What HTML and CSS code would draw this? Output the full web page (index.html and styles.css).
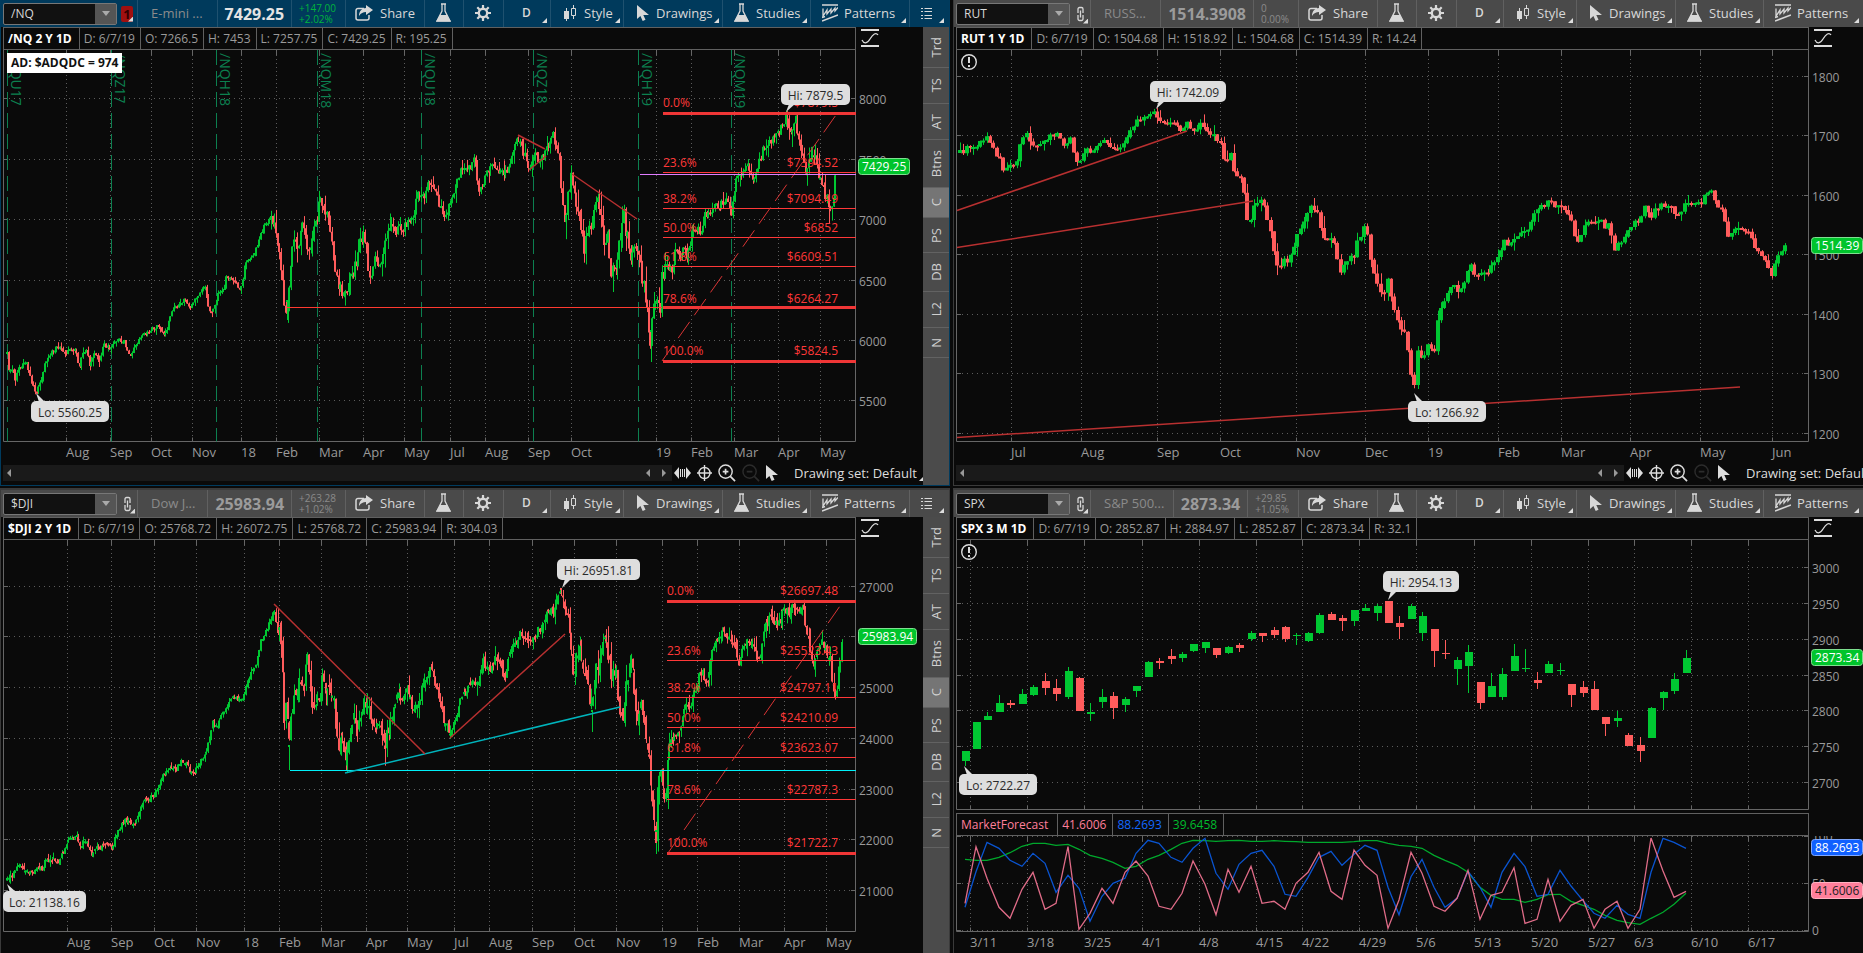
FILE: index.html
```html
<!DOCTYPE html>
<html lang="en">
<head>
<meta charset="utf-8">
<meta name="viewport" content="width=device-width, initial-scale=1">
<title>Charts</title>
<link rel="stylesheet" href="styles.css">
</head>
<body>
<svg class="sprite" aria-hidden="true">
  <symbol id="i-share" viewBox="0 0 18 16"><path d="M9 3.500H3a2 2 0 0 0-2 2V13a2 2 0 0 0 2 2h9a2 2 0 0 0 2-2v-3" fill="none" stroke="currentColor" stroke-width="1.500"/><path d="M11 0l7 5-7 5V7C8 7 6 8 4 11c0-5 3-8 7-8z" fill="currentColor"/></symbol>
  <symbol id="i-flask" viewBox="0 0 15 20"><path d="M5 1h5M6 1v7L1 18h13L9 8V1" fill="none" stroke="currentColor" stroke-width="1.300"/><path d="M4 12h7l4 6.500H0z" fill="currentColor"/></symbol>
  <symbol id="i-gear" viewBox="0 0 16 16"><circle cx="8" cy="8" r="4.200" fill="none" stroke="currentColor" stroke-width="2.400"/><path d="M8 0v3M8 13v3M0 8h3M13 8h3M2.300 2.300l2.200 2.200M11.500 11.500l2.200 2.200M2.300 13.700l2.200-2.200M11.500 4.500l2.200-2.200" stroke="currentColor" stroke-width="2.200"/></symbol>
  <symbol id="i-candles" viewBox="0 0 14 16"><path d="M3.500 3v13M10.500 0v3M10.500 11v3" stroke="currentColor"/><path d="M1 6h5v8H1z" fill="currentColor"/><path d="M8.500 3.500h4v7h-4z" fill="none" stroke="currentColor"/></symbol>
  <symbol id="i-cursor" viewBox="0 0 12 16"><path d="M0 0v14l3.400-3 2.300 5 2.800-1.200L6.300 10H12z" fill="currentColor"/></symbol>
  <symbol id="i-patterns" viewBox="0 0 16 18"><path d="M0 1h16M1 4.500v7.500l4-6v4l4-5v4l4-5v3l3-3.500" fill="none" stroke="currentColor" stroke-width="1.300"/><path d="M0 17l16-6M0 13.500l3-1" stroke="currentColor" stroke-width="1.600"/></symbol>
  <symbol id="i-list" viewBox="0 0 11 13"><path d="M0 1.500h2M0 4.500h2M0 8.500h2M0 11.500h2M3.500 1.500H11M3.500 4.500H11M3.500 8.500H11M3.500 11.500H11" stroke="currentColor"/></symbol>
  <symbol id="i-link" viewBox="0 0 12 18"><path d="M3 8V4a1.500 1.500 0 0 1 1.500-1.500h2A1.500 1.500 0 0 1 8 4v4M3 10v4a1.500 1.500 0 0 0 1.500 1.500h2A1.500 1.500 0 0 0 8 14v-4M5.500 5.500v7" fill="none" stroke="currentColor" stroke-width="1.300"/></symbol>
  <symbol id="i-scale" viewBox="0 0 18 18"><path d="M0 1h18M0 17h18" stroke="currentColor" stroke-width="2"/><path d="M1 11c2 4 5 4 8-1s6-7 8-4" fill="none" stroke="currentColor" stroke-width="1.300"/></symbol>
  <symbol id="i-pan" viewBox="0 0 17 12"><path d="M0 6l5-6v12zM17 6l-5-6v12z" fill="currentColor"/><path d="M6.500 2v8M8.500 2v8M10.500 2v8" stroke="currentColor"/></symbol>
  <symbol id="i-cross" viewBox="0 0 15 16"><circle cx="7.500" cy="8" r="5.500" fill="none" stroke="currentColor" stroke-width="1.400"/><path d="M7.500 0v16M0 8h15" stroke="currentColor" stroke-width="1.400"/></symbol>
  <symbol id="i-zoomin" viewBox="0 0 19 19"><circle cx="8" cy="8" r="7" fill="none" stroke="currentColor" stroke-width="1.500"/><path d="M5 8h6M8 5v6M13 13l5 5" stroke="currentColor" stroke-width="1.800"/></symbol>
  <symbol id="i-zoomout" viewBox="0 0 19 19"><circle cx="8" cy="8" r="7" fill="none" stroke="currentColor" stroke-width="1.500"/><path d="M5 8h6M13 13l5 5" stroke="currentColor" stroke-width="1.800"/></symbol>
  <symbol id="i-alert" viewBox="0 0 18 18"><circle cx="9" cy="9" r="7.300" fill="none" stroke="currentColor" stroke-width="1.400"/><path d="M9 4v6M9 12v2" stroke="currentColor" stroke-width="2"/></symbol>
</svg>
<main class="desk" id="desk"></main>
<script src="charts.js"></script>
</body>
</html>
```
FILE: styles.css
```css
* { box-sizing: border-box; }
body {
  margin: 0;
  background: #0a0a0a;
  color: #9a9a9a;
  font: 12px/16px "Open Sans", "Noto Sans", sans-serif;
}
button, input { font: inherit; color: inherit; }
button { background: none; border: 0; padding: 0; }
.sprite { position: absolute; width: 0; height: 0; }
.desk {
  display: grid;
  grid-template-columns: 950fr 910fr;
  grid-template-rows: 486fr 465fr;
  gap: 2px 3px;
  height: 100vh;
  min-height: 600px;
  overflow: hidden;
}
.panel {
  display: flex;
  flex-direction: column;
  min-width: 0;
  min-height: 0;
  overflow: hidden;
  padding-left: 2px;
  border: 1px solid #3a3a3a;
  border-top: 0;
}
.panel--lower { border-top: 2px solid #3a3a3a; border-bottom: 0; }
.panel--right { border-right: 0; }
.panel--active { border-color: #003b5e; }

/* toolbar */
.toolbar {
  display: flex;
  flex: none;
  height: 27px;
  margin-left: -2px;
  background: #4a4a4a;
  color: #d8d8d8;
  font-size: 13px;
}
.panel--active .toolbar { background: #003a5c; }
.symbol { display: flex; flex: none; align-items: center; width: 136px; padding-left: 2px; gap: 4px; }
.combo {
  display: flex;
  width: 114px;
  height: 22px;
  border: 1px solid #777;
  border-radius: 2px;
  background: #111;
}
.combo__input { flex: 1; min-width: 0; padding: 0 0 0 7px; border: 0; background: none; font-size: 12px; outline: 0; }
.combo__arrow { display: grid; place-items: center; width: 21px; background: #555; }
.combo__arrow::before { content: ""; border: 4px solid transparent; border-top: 5px solid #aaa; border-bottom: 0; }
.link { position: relative; display: grid; place-items: center; width: 14px; height: 20px; }
.link--red { background: #a01010; color: #300; border-radius: 2px; height: 16px; width: 12px; font-weight: 700; }
.quote { display: flex; flex: none; width: 208px; }
.quote > * { border-left: 1px solid rgba(255, 255, 255, .12); }
.quote__name { flex: 1; padding: 5px 0 0 13px; color: #8b8b8b; overflow: hidden; white-space: nowrap; }
.quote__price { padding: 3px 7px 0; color: #9b9b9b; font-size: 16px; line-height: 22px; font-weight: 700; }
.quote__change { padding: 3px 9px 0 7px; color: #8b8b8b; font-size: 10px; line-height: 11px; }
.panel--active .quote__price { color: #e4e4e4; }
.panel--active .quote__change { color: #00b43c; }
.tool {
  position: relative;
  display: flex;
  flex: none;
  align-items: center;
  gap: 7px;
  padding: 0 0 1px 11px;
  border-left: 1px solid rgba(255, 255, 255, .12);
}
.tool--share { width: 79px; padding-left: 9px; }
.tool--flask { width: 39px; }
.tool--gear { width: 40px; }
.tool--period { width: 47px; padding-left: 18px; font-weight: 600; font-size: 12px; }
.tool--style { width: 73px; padding-left: 12px; }
.tool--drawings { width: 99px; padding-left: 13px; }
.tool--studies { width: 88px; }
.tool--patterns { width: 99px; gap: 6px; }
.tool--list { width: 38px; }
.menu::after {
  content: "";
  position: absolute;
  right: 3px;
  bottom: 4px;
  width: 5px;
  height: 5px;
  background: #ddd;
  clip-path: polygon(100% 0, 100% 100%, 0 100%);
}
.link.menu::after { right: 0; bottom: 0; }
.icon { display: block; flex: none; }

/* chart */
.panel__body { display: flex; flex: 1; min-height: 0; }
.chart { position: relative; display: flex; flex: 1; flex-direction: column; min-width: 0; overflow: hidden; }
.head { display: flex; flex: none; height: 23px; }
.readout {
  display: flex;
  flex: 1;
  margin: 0;
  padding: 0;
  list-style: none;
  border: 1px solid #606060;
  line-height: 21px;
  white-space: nowrap;
}
.readout li { padding: 0 5px 0 4px; border-right: 1px solid #606060; }
.readout li:first-child { padding: 0 7px 0 4px; color: #fff; font-weight: 700; }
.head__scale { flex: none; padding: 2px 0 0 5px; color: #ddd; }
.chart--left .head__scale { width: 67px; }
.chart--right .head__scale { width: 54px; }
.plot { position: relative; flex: 1; min-height: 0; }
.plot--price { flex: 272; }
.plot--study { flex: 117; }
.surface { display: block; position: absolute; width: 100%; height: 100%; overflow: hidden; }
.head--study { margin-top: 1px; font-size: 12px; }
.readout--study li, .readout--study li:first-child { padding: 0 6px 0 4px; font-weight: 400; }
.readout--study li:first-child { padding-right: 9px; }
.readout--study .pink, .readout--study li.pink:first-child { color: #ff7f9b; }
.readout--study .blue { color: #1468ff; }
.readout--study .green { color: #00bb2d; }
.note {
  position: absolute;
  left: 4px;
  top: 3px;
  padding: 2px 4px;
  background: #fff;
  color: #111;
  font-weight: 700;
}
.alert { position: absolute; left: 4px; top: 3px; color: #ddd; }
.foot { display: flex; flex: none; align-items: center; height: 22px; padding-bottom: 2px; }
.scroll { display: flex; flex: 1; align-items: center; gap: 12px; height: 16px; padding: 0 6px 0 4px; background: #1a1a1a; }
.scroll button { width: 4px; height: 8px; background: #999; clip-path: polygon(100% 0, 100% 100%, 0 50%); }
.scroll button:first-child { margin-right: auto; }
.scroll button:last-child { clip-path: polygon(0 0, 100% 50%, 0 100%); }
.tools { display: flex; flex: none; align-items: center; width: 251px; padding-left: 2px; gap: 6px; color: #ddd; font-size: 13px; white-space: nowrap; }
.chart--right .tools { width: 239px; overflow: hidden; }
.tools .dim { color: #2c2c2c; }
.tools .set { position: relative; padding: 0 7px 0 10px; }
.tools .set::after { right: 0; bottom: 0; }

/* side tabs */
.tabs { flex: none; width: 26px; background: #4b4b4b; color: #d0d0d0; font-size: 13px; }
.tabs button {
  display: flex;
  align-items: center;
  width: 26px;
  padding: 10px 0;
  border-bottom: 1px solid #626262;
  writing-mode: vertical-rl;
  line-height: 26px;
}
.tabs button span { transform: rotate(180deg); }
.tabs .on { background: #757575; }

/* drawing */
.grid { stroke: #5c5c5c; fill: none; }
.grid--h { stroke-dasharray: 1 4; }
.grid--v { stroke-dasharray: 1 3; }
.frame { stroke: #666; fill: none; }
.axis { fill: #9a9a9a; font-size: 12px; }
.axis--date { font-size: 13px; }
.roll { stroke: #0c8050; stroke-dasharray: 15 6; }
.roll-text { fill: #0c8050; font-size: 14px; }
.up { stroke: #00c832; fill: none; }
.down { stroke: #ff5c5c; fill: none; }
.body-2 { stroke-width: 2; }
.body-4 { stroke-width: 4; }
.body-8 { stroke-width: 8; }
.trend { fill: none; stroke: #b83030; stroke-width: 1.500; }
.trend--bright { stroke: #ff3a30; stroke-width: 1; }
.trend--cyan { stroke: #00f0f8; stroke-width: 1; }
.trend--teal { stroke: #00b4bc; }
.trend--violet { stroke: #e07cff; stroke-width: 1; }
.fib { stroke: #ff3838; }
.fib--thick { stroke: #f03636; stroke-width: 3; }
.fib--diag { stroke: #d83434; stroke-dasharray: 20 8; fill: none; }
.fib-text { fill: #ff3838; font-size: 12px; }
.bubble { fill: #dedede; }
.bubble-text { fill: #2a2a2a; font-size: 12px; }
.tag { stroke-width: 1; }
.tag--green { fill: #00c42c; stroke: #7fe090; }
.tag--blue { fill: #1060ff; stroke: #7fa8ff; }
.tag--pink { fill: #ff7f9b; stroke: #ffb0c0; }
.tag-text { fill: #fff; font-size: 12px; }
.tag-text--dark { fill: #222; }
.line { fill: none; stroke-width: 1.300; }
.line--green { stroke: #00a82c; }
.line--blue { stroke: #0a54d0; }
.line--pink { stroke: #e06c88; }
```
FILE: charts.js
```js
const months2y = 'Aug Sep Oct Nov 18 Feb Mar Apr May Jul Aug Sep Oct';

const nqPath = [7,354,9,372,12,368,15,380,18,370,22,365,26,360,29,372,32,384,36,392,41,378,46,362,52,350,58,347,62,348,66,354,70,350,76,350,79,368,82,352,86,350,90,366,95,354,99,362,104,341,107,348,112,345,117,340,124,341,130,356,136,345,143,334,150,330,158,325,165,335,170,318,171,312,178,305,184,299,191,308,196,297,200,292,205,289,209,310,213,310,218,295,223,290,227,276,233,280,241,290,245,265,252,257,258,243,264,227,271,216,276,228,279,250,282,275,284,304,286,308,290,280,293,245,298,248,302,222,308,255,313,232,316,225,320,197,324,210,328,215,332,240,336,275,339,285,344,299,350,280,356,265,361,240,364,237,368,265,371,280,375,255,379,268,384,245,388,230,392,222,397,232,403,228,408,222,413,217,416,196,420,195,425,195,428,185,435,185,440,205,444,217,450,208,454,190,460,172,466,168,470,168,474,160,479,192,485,178,490,165,495,165,500,172,505,175,511,160,518,138,523,150,529,168,535,155,541,160,548,148,552,133,556,145,560,165,563,205,565,218,571,177,575,200,578,215,582,235,585,250,588,230,592,220,597,197,601,215,604,245,608,235,611,276,616,265,620,235,624,213,626,232,632,260,635,250,638,255,642,275,646,300,649,335,651,355,653,303,657,300,661,320,662,278,666,265,672,270,677,245,681,260,684,250,688,258,691,235,696,225,700,235,705,215,710,210,716,205,722,205,727,198,731,215,735,185,740,175,745,165,748,160,751,175,755,180,758,165,763,150,770,143,778,135,783,120,787,118,791,128,796,118,799,140,803,155,806,175,810,160,813,150,818,170,822,185,826,195,830,215,834,195,836,168];

const djiPath = [7,880,12,874,19,865,26,870,32,872,37,868,42,870,46,860,53,858,58,862,65,850,69,840,76,835,80,846,86,838,91,855,95,848,101,848,106,840,112,850,116,835,122,822,127,820,133,825,138,818,144,802,150,797,156,792,161,780,165,772,170,768,176,770,180,762,186,763,190,772,196,770,203,758,206,752,210,735,213,722,217,728,222,715,227,705,231,697,237,699,243,698,250,675,256,665,261,640,265,634,270,622,274,608,277,625,280,630,283,680,285,740,286,700,289,742,291,710,296,690,300,680,304,690,307,655,310,680,313,715,317,700,320,690,323,675,326,690,330,692,334,702,338,750,342,730,345,755,346,760,350,735,354,720,358,730,362,710,366,700,370,710,373,735,378,718,382,735,385,750,388,730,393,710,397,698,402,700,406,690,410,700,414,710,420,700,424,680,428,670,432,672,436,690,440,705,445,725,450,732,456,720,461,700,468,688,473,680,477,684,483,662,490,672,496,658,501,670,505,683,509,650,515,645,521,632,527,636,533,640,538,630,543,625,547,605,553,615,558,600,561,592,565,605,569,615,571,650,573,680,577,650,582,655,586,680,591,705,592,710,596,670,600,660,604,628,608,660,612,675,616,670,618,710,622,720,626,690,632,645,634,690,637,720,641,705,645,725,648,750,651,780,655,830,656,845,658,785,662,775,665,800,669,745,675,740,680,728,684,705,688,710,692,700,697,685,702,668,706,685,711,660,716,640,722,635,728,633,733,640,738,665,741,655,746,645,750,640,754,650,758,662,762,650,765,627,771,615,777,628,784,612,790,610,795,608,800,610,804,615,808,635,813,665,818,650,822,640,826,655,830,660,833,685,836,695,840,660,843,637];

const rutPath = [960,153,967,147,975,144,982,141,987,133,992,145,997,157,1001,155,1004,170,1010,168,1016,160,1020,148,1026,133,1033,143,1040,145,1047,140,1054,135,1060,137,1065,147,1070,138,1074,158,1079,160,1085,152,1093,148,1100,143,1108,142,1112,150,1115,142,1118,153,1123,143,1129,130,1135,122,1142,120,1150,116,1156,112,1160,120,1166,126,1173,125,1180,128,1187,122,1193,132,1200,122,1206,132,1212,134,1218,138,1220,145,1224,160,1230,152,1235,172,1240,178,1244,195,1248,225,1252,215,1258,200,1262,198,1268,225,1272,235,1278,270,1283,255,1288,268,1293,250,1297,232,1302,225,1310,208,1315,205,1320,230,1327,245,1333,240,1341,270,1348,257,1354,255,1359,235,1367,225,1371,266,1378,288,1384,290,1388,280,1393,305,1398,327,1403,330,1407,350,1412,380,1414,391,1417,355,1423,352,1430,343,1434,355,1436,325,1442,305,1448,290,1455,287,1460,290,1467,275,1471,267,1476,280,1482,275,1490,267,1497,255,1504,243,1511,245,1518,238,1524,230,1530,224,1535,210,1543,205,1548,200,1554,207,1561,205,1566,208,1570,215,1575,238,1579,242,1582,228,1590,223,1597,225,1601,218,1606,228,1610,218,1613,250,1618,243,1624,240,1630,228,1638,220,1644,207,1651,215,1656,208,1663,204,1670,206,1675,217,1680,215,1685,203,1692,204,1697,196,1701,207,1706,195,1709,188,1713,190,1716,208,1720,212,1724,213,1728,240,1732,232,1737,222,1743,235,1748,232,1753,245,1757,250,1763,258,1768,266,1772,276,1778,252,1783,250,1787,246];

/* x, body top, body bottom, high, low, 1 = up */
const spxBars = [
[965,751,761,751,766,1],[976,722,749,722,749,1],[987,716,720,712,720,1],[999,703,712,695,712,1],[1010,703,705,700,708,0],[1022,694,704,689,704,1],[1033,687,695,685,696,1],[1045,681,688,673,695,0],[1056,688,694,679,701,0],[1068,671,697,667,699,1],[1079,678,711,677,711,0],[1090,712,714,703,721,1],[1102,697,702,689,708,1],[1113,696,708,692,719,0],[1125,699,705,697,712,1],[1136,686,691,686,697,1],[1148,662,677,661,677,1],[1159,661,663,658,669,0],[1171,656,659,649,664,0],[1182,654,658,652,662,1],[1193,644,651,644,652,1],[1205,642,648,642,653,1],[1216,648,655,648,658,0],[1228,647,653,646,654,1],[1239,645,648,643,652,0],[1251,633,639,631,641,1],[1262,633,636,633,642,0],[1274,630,635,627,638,0],[1285,627,639,626,642,0],[1296,635,636,633,645,1],[1308,633,641,632,642,1],[1319,615,633,613,634,1],[1331,614,620,612,620,0],[1342,618,621,615,631,0],[1354,610,621,610,626,1],[1365,608,611,604,611,1],[1377,606,613,604,621,1],[1388,601,623,601,623,0],[1399,623,627,616,639,0],[1411,606,619,604,619,1],[1422,616,633,612,641,1],[1434,629,651,629,667,0],[1445,653,654,640,659,0],[1457,660,669,657,685,1],[1468,652,666,645,693,1],[1480,682,703,682,709,0],[1491,686,697,673,697,1],[1502,674,697,668,700,1],[1514,656,671,644,671,1],[1525,668,669,649,672,1],[1537,680,683,672,689,0],[1548,664,673,661,673,1],[1560,670,671,663,675,1],[1571,684,695,684,707,0],[1583,687,693,681,697,0],[1594,689,710,681,710,0],[1605,717,724,717,736,0],[1617,718,721,711,727,1],[1628,735,746,733,746,0],[1640,745,751,737,762,0],[1651,708,738,707,738,1],[1663,692,698,691,710,1],[1674,679,691,673,694,1],[1686,658,673,650,673,1]];

/* oscillator values, in thirds of a pixel below y = 800 */
const forecast = {
green: [178,181,181,172,158,139,130,130,136,133,148,166,175,187,205,199,178,166,148,130,121,122,124,122,121,124,124,122,124,125,127,127,127,127,125,122,122,130,136,139,145,166,181,196,217,262,286,298,298,307,298,284,283,304,316,328,346,361,368,373,355,337,313,280],
blue: [322,215,127,145,181,199,160,190,277,226,265,364,289,250,235,160,121,130,172,187,145,115,220,268,193,160,151,199,283,289,232,172,154,196,163,136,151,262,344,230,178,262,322,295,214,262,322,217,160,200,289,283,211,258,302,340,355,316,343,355,217,115,127,145],
pink: [310,140,235,322,355,268,217,328,310,140,388,340,265,310,217,183,228,319,328,280,183,253,344,208,277,199,310,304,328,250,217,157,274,298,150,196,226,385,300,157,220,319,334,295,211,358,286,277,203,370,358,238,364,316,298,385,328,304,385,328,114,213,292,274]
};

const spxX = [970,1027,1084,1142,1199,1256,1302,1359,1416,1474,1531,1588,1634,1691,1748];
const spxDates = '3/11 3/18 3/25 4/1 4/8 4/15 4/22 4/29 5/6 5/13 5/20 5/27 6/3 6/10 6/17'.split(' ');

const panels = [
{ symbol: '/NQ', name: 'E-mini ...', price: '7429.25', change: ['+147.00', '+2.02%'], active: true, foot: true,
  readout: ['/NQ 2 Y 1D', 'D: 6/7/19', 'O: 7266.5', 'H: 7453', 'L: 7257.75', 'C: 7429.25', 'R: 195.25'],
  note: 'AD: $ADQDC = 974',
  plots: [{ ox: 3, oy: 50, h: 413, bottom: 441,
    xs: [66,110,151,192,241,276,319,363,404,450,485,528,571,656,691,734,778,820],
    dates: (months2y + ' 19 Feb Mar Apr May').split(' '),
    ys: [[98,8000],[159,7500],[219,7000],[280,6500],[340,6000],[400,5500]],
    rolls: [[7,'/NQU17'],[111,'/NQZ17'],[216,'/NQH18'],[317,'/NQM18'],[421,'/NQU18'],[533,'/NQZ18'],[638,'/NQH19'],[731,'/NQM19']],
    path: nqPath, step: 1.65, width: 2, noise: [[270,5],[400,14],[560,10],[670,16],[780,10],[900,14]],
    spikes: [[287,300,320,1],[651,330,362,1],[829,205,224,0]],
    trends: [['bright',287,307,662,307],['violet',640,174,856,174],['',518,135,545,149],['',529,170,546,156],['',572,174,637,219]],
    fib: { x: 663, end: 838, diag: [662,361,836,115], rows: [[113,107,'0.0%','$7879.5',1],[172,167,'23.6%','$7394.52'],[208,203,'38.2%','$7094.49'],[237,232,'50.0%','$6852'],[266,261,'61.8%','$6609.51'],[307,303,'78.6%','$6264.27',1],[361,355,'100.0%','$5824.5',1]] },
    bubbles: [[781,84,69,786,112,'Hi: 7879.5'],[31,401,78,36,393,'Lo: 5560.25']],
    tags: [['green',166,'7429.25']] }] },
{ symbol: 'RUT', name: 'RUSS...', price: '1514.3908', change: ['0', '0.00%'], right: true, foot: true, alert: true,
  readout: ['RUT 1 Y 1D', 'D: 6/7/19', 'O: 1504.68', 'H: 1518.92', 'L: 1504.68', 'C: 1514.39', 'R: 14.24'],
  plots: [{ ox: 956, oy: 50, h: 413, bottom: 441,
    xs: [1011,1081,1157,1220,1296,1365,1428,1498,1561,1630,1700,1772],
    dates: 'Jul Aug Sep Oct Nov Dec 19 Feb Mar Apr May Jun'.split(' '),
    ys: [[76,1800],[135,1700],[195,1600],[254,1500],[314,1400],[373,1300],[433,1200]],
    path: rutPath, step: 3.34, width: 4, noise: [[1220,8],[1440,11],[1800,8]],
    trends: [['',957,210.5,1187,131],['',957,247.5,1253,201],['',957,437.5,1740,387]],
    bubbles: [[1150,81,76,1156,109,'Hi: 1742.09'],[1408,401,78,1414,393,'Lo: 1266.92']],
    tags: [['green',245,'1514.39']] }] },
{ symbol: '$DJI', name: 'Dow J...', price: '25983.94', change: ['+263.28', '+1.02%'], lower: true,
  readout: ['$DJI 2 Y 1D', 'D: 6/7/19', 'O: 25768.72', 'H: 26072.75', 'L: 25768.72', 'C: 25983.94', 'R: 304.03'],
  plots: [{ ox: 3, oy: 540, h: 413, bottom: 931,
    xs: [67,111,154,196,244,279,321,366,407,454,489,532,574,616,662,697,739,784,826],
    dates: (months2y + ' Nov 19 Feb Mar Apr May').split(' '),
    ys: [[586,27000],[636,''],[687,25000],[738,24000],[789,23000],[839,22000],[890,21000]],
    path: djiPath, step: 1.66, width: 2, noise: [[275,5],[400,16],[560,10],[670,17],[780,11],[900,12]], gaps: true,
    spikes: [[289,745,770,1],[346,755,770,0],[656,830,854,1],[592,710,732,1],[561,588,596,0]],
    trends: [['cyan',290,770,856,770],['teal',345,773,620,707],['',274,604,425,754],['',450,738,565,634]],
    fib: { x: 667, end: 838, diag: [668,853,840,606], rows: [[601,595,'0.0%','$26697.48',1],[660,655,'23.6%','$25523.43'],[697,692,'38.2%','$24797.11'],[727,722,'50.0%','$24210.09'],[757,752,'61.8%','$23623.07'],[799,794,'78.6%','$22787.3'],[853,847,'100.0%','$21722.7',1]] },
    bubbles: [[557,559,83,562,588,'Hi: 26951.81'],[3,891,83,7,884,'Lo: 21138.16']],
    tags: [['green',636,'25983.94']] }] },
{ symbol: 'SPX', name: 'S&amp;P 500...', price: '2873.34', change: ['+29.85', '+1.05%'], right: true, lower: true, alert: true,
  readout: ['SPX 3 M 1D', 'D: 6/7/19', 'O: 2852.87', 'H: 2884.97', 'L: 2852.87', 'C: 2873.34', 'R: 32.1'],
  study: [['pink','MarketForecast'],['pink','41.6006'],['blue','88.2693'],['green','39.6458']],
  plots: [
  { ox: 956, oy: 540, h: 272, bottom: 809, xs: spxX,
    ys: [[567,3000],[603,2950],[639,2900],[675,2850],[710,2800],[746,2750],[782,2700]],
    bars: spxBars,
    bubbles: [[1383,571,76,1388,600,'Hi: 2954.13'],[959,774,78,964,766,'Lo: 2722.27']],
    tags: [['green',657,'2873.34']] },
  { ox: 956, oy: 836, h: 117, bottom: 931, xs: spxX, dates: spxDates,
    ys: [[836,100],[883,50],[930,0]], clipAxis: true, lines: forecast,
    tags: [['blue',847,'88.2693'],['pink',890,'41.6006','dark']] }] }
];

const icon = (id, w, h) => `<svg class="icon" width="${w}" height="${h}" aria-hidden="true"><use href="#i-${id}"/></svg>`;
const tool = (kind, label, art, menu) => `<button type="button" class="tool tool--${kind}${menu ? ' menu' : ''}" aria-label="${label}">${art}</button>`;

function toolbar(p) {
  const link = p.active
    ? '<button type="button" class="link link--red menu" aria-label="Link">1</button>'
    : `<button type="button" class="link menu" aria-label="Link">${icon('link', 12, 18)}</button>`;
  return `<header class="toolbar">
    <div class="symbol"><div class="combo"><input class="combo__input" aria-label="Symbol" value="${p.symbol}"><button type="button" class="combo__arrow" aria-label="Choose symbol"></button></div>${link}</div>
    <div class="quote"><span class="quote__name">${p.name}</span><span class="quote__price">${p.price}</span><span class="quote__change">${p.change.join('<br>')}</span></div>
    ${tool('share', 'Share', icon('share', 18, 16) + 'Share')}
    ${tool('flask', 'Edit studies', icon('flask', 15, 20))}
    ${tool('gear', 'Settings', icon('gear', 16, 16))}
    ${tool('period', 'Day', 'D', true)}
    ${tool('style', 'Style', icon('candles', 14, 16) + 'Style', true)}
    ${tool('drawings', 'Drawings', icon('cursor', 12, 16) + 'Drawings', true)}
    ${tool('studies', 'Studies', icon('flask', 15, 20) + 'Studies', true)}
    ${tool('patterns', 'Patterns', icon('patterns', 16, 18) + 'Patterns', true)}
    ${p.right ? '' : tool('list', 'More', icon('list', 11, 13), true)}
  </header>`;
}

const foot = `<footer class="foot"><div class="scroll"><button type="button" aria-label="Scroll to start"></button><button type="button" aria-label="Scroll left"></button><button type="button" aria-label="Scroll right"></button></div>
  <div class="tools"><button type="button" aria-label="Pan">${icon('pan', 17, 12)}</button><button type="button" aria-label="Crosshair">${icon('cross', 15, 16)}</button><button type="button" aria-label="Zoom in">${icon('zoomin', 18, 18)}</button><button type="button" class="dim" aria-label="Zoom out">${icon('zoomout', 18, 18)}</button><button type="button" aria-label="Pointer">${icon('cursor', 12, 16)}</button><button type="button" class="set menu">Drawing set: Default</button></div></footer>`;

const tabs = `<nav class="tabs" aria-label="Side panels">${['Trd','TS','AT','Btns','C','PS','DB','L2','N'].map(t => `<button type="button"${t === 'C' ? ' class="on"' : ''}><span>${t}</span></button>`).join('')}</nav>`;

document.getElementById('desk').innerHTML = panels.map(p => {
  const cls = ['panel', p.active && 'panel--active', p.right && 'panel--right', p.lower && 'panel--lower'].filter(Boolean).join(' ');
  const side = p.right ? 'right' : 'left';
  const surface = '<svg class="surface"></svg>';
  const study = p.study ? `<div class="head head--study"><ul class="readout readout--study">${p.study.map(s => `<li class="${s[0]}">${s[1]}</li>`).join('')}</ul><div class="head__scale"></div></div><div class="plot plot--study">${surface}</div>` : '';
  const extra = (p.note ? `<div class="note">${p.note}</div>` : '') + (p.alert ? `<div class="alert">${icon('alert', 18, 18)}</div>` : '');
  return `<section class="${cls}" aria-label="${p.symbol} chart">${toolbar(p)}
    <div class="panel__body"><div class="chart chart--${side}">
      <div class="head"><ul class="readout">${p.readout.map(r => `<li>${r}</li>`).join('')}</ul><div class="head__scale">${icon('scale', 18, 18)}</div></div>
      <div class="plot${p.study ? ' plot--price' : ''}">${surface}${extra}</div>
      ${study}
      ${p.foot ? foot : ''}
    </div>${p.right ? '' : tabs}</div></section>`;
}).join('');

function random(seed) {
  let s = seed;
  return () => { s = (s * 16807) % 2147483647; return s / 2147483647; };
}

/* Expands a coarse price path into one bar per trading day. */
function makeBars(c) {
  const rnd = random(7919 + c.path.length);
  const p = c.path, out = [];
  let k = 0, prev = p[1];
  for (let x = p[0]; x <= p[p.length - 2]; x += c.step) {
    while (k < p.length - 4 && x > p[k + 2]) k += 2;
    const t = Math.min(1, (x - p[k]) / (p[k + 2] - p[k]));
    const amp = c.noise.find(n => x < n[0])[1];
    const close = p[k + 1] + (p[k + 3] - p[k + 1]) * t + (rnd() - .5) * amp * .9;
    const open = prev + (c.gaps ? (rnd() - .5) * amp * .7 : 0);
    let top = Math.min(open, close), bottom = Math.max(open, close);
    if (bottom - top < 2) bottom = top + 2;
    out.push([x, top, bottom, top - rnd() * rnd() * amp * 1.2, bottom + rnd() * rnd() * amp * 1.2, close < open ? 1 : 0]);
    prev = close;
  }
  (c.spikes || []).forEach(s => out.push([s[0], s[1], s[1] + 2, s[1], s[2], s[3]]));
  return out;
}

function draw(svg, c) {
  const right = c.ox > 900, axis = right ? 54 : 67;
  const W = svg.clientWidth - axis, H = svg.clientHeight;
  const X = x => (x - c.ox) * W / 853, Y = y => (y - c.oy) * H / c.h;
  const cx = x => Math.round(X(x)) + .5, cy = y => Math.round(Y(y)) + .5;
  const base = cy(c.bottom);
  let s = '';
  const d = { g: '', h: '', t: `M.5 0V${base}H${W - .5}V0` };
  c.xs.forEach(x => { d.g += `M${cx(x)} 5V${base - 4}`; d.t += `M${cx(x)} 0v5M${cx(x)} ${base}v-4`; });
  c.ys.forEach(([y]) => { d.h += `M6 ${cy(y)}H${W - 5}`; d.t += `M0 ${cy(y)}h5M${W} ${cy(y)}h-5`; });
  s += `<path class="grid grid--v" d="${d.g}"/><path class="grid grid--h" d="${d.h}"/><path class="frame" d="${d.t}"/>`;
  (c.dates || []).forEach((t, i) => { s += `<text class="axis axis--date" x="${Math.round(X(c.xs[i]))}" y="${base + 15}">${t}</text>`; });
  c.ys.forEach(([y, t]) => {
    if (t !== '') s += `<text class="axis" x="${W + 3}" y="${cy(y) + (c.clipAxis ? 4 : 5)}">${t}</text>`;
  });
  (c.rolls || []).forEach(([x, t]) => {
    s += `<path class="roll" d="M${cx(x)} 0V${base}"/><text class="roll-text" transform="translate(${cx(x) + 3} 3) rotate(90)">${t}</text>`;
  });
  const bars = c.bars || (c.path ? makeBars(c) : []);
  const w = { 1: '', 0: '' }, b = { 1: '', 0: '' };
  bars.forEach(([x, top, bot, hi, lo, up]) => {
    const px = Math.round(X(x));
    w[up] += `M${px + .5} ${Y(hi).toFixed(1)}V${Y(lo).toFixed(1)}`;
    b[up] += `M${c.bars ? px + 1 : px} ${Y(top).toFixed(1)}V${Y(bot).toFixed(1)}`;
  });
  const size = c.bars ? 8 : c.width;
  s += `<path class="down" d="${w[0]}"/><path class="up" d="${w[1]}"/><path class="down body-${size}" d="${b[0]}"/><path class="up body-${size}" d="${b[1]}"/>`;
  Object.entries(c.lines || {}).forEach(([name, v]) => {
    s += `<polyline class="line line--${name}" points="${v.map((n, i) => X(spxBars[i][0]).toFixed(1) + ',' + Y(800 + n / 3).toFixed(1)).join(' ')}"/>`;
  });
  if (c.fib) {
    const f = c.fib, g = f.diag;
    f.rows.forEach(([y, ty, pct, price, thick]) => {
      s += `<path class="fib${thick ? ' fib--thick' : ''}" d="M${X(f.x)} ${cy(y)}H${W}"/><text class="fib-text" x="${X(f.x)}" y="${Y(ty)}">${pct}</text><text class="fib-text" x="${X(f.end)}" y="${Y(ty)}" text-anchor="end">${price}</text>`;
    });
    s += `<path class="fib--diag" d="M${X(g[0])} ${Y(g[1])}L${X(g[2])} ${Y(g[3])}"/>`;
  }
  (c.trends || []).forEach(([k, x1, y1, x2, y2]) => {
    const fy = y1 === y2 ? cy : Y;
    s += `<path class="trend${k ? ' trend--' + k : ''}" d="M${X(x1)} ${fy(y1)}L${X(x2)} ${fy(y2)}"/>`;
  });
  (c.bubbles || []).forEach(([x, y, bw, px, py, t]) => {
    const left = X(x), top = Y(y), edge = py > y ? top + 20 : top + 1;
    s += `<path class="bubble" d="M${X(px)} ${Y(py)}L${X(px) + 3} ${edge}h6z"/><rect class="bubble" x="${left}" y="${top}" width="${bw}" height="21" rx="5"/><text class="bubble-text" x="${left + bw / 2}" y="${top + 16}" text-anchor="middle">${t}</text>`;
  });
  (c.tags || []).forEach(([k, y, t, dark]) => {
    const tw = right ? 51 : (t.length > 7 ? 58 : 51);
    s += `<rect class="tag tag--${k}" x="${W + 2.5}" y="${cy(y) - 8}" width="${tw}" height="16" rx="3"/><text class="tag-text${dark ? ' tag-text--dark' : ''}" x="${W + 6}" y="${cy(y) + 4}">${t}</text>`;
  });
  svg.innerHTML = s;
}

const surfaces = [...document.querySelectorAll('.surface')];
const specs = panels.flatMap(p => p.plots);
function drawAll() { surfaces.forEach((svg, i) => draw(svg, specs[i])); }
window.addEventListener('resize', drawAll);
drawAll();
```
